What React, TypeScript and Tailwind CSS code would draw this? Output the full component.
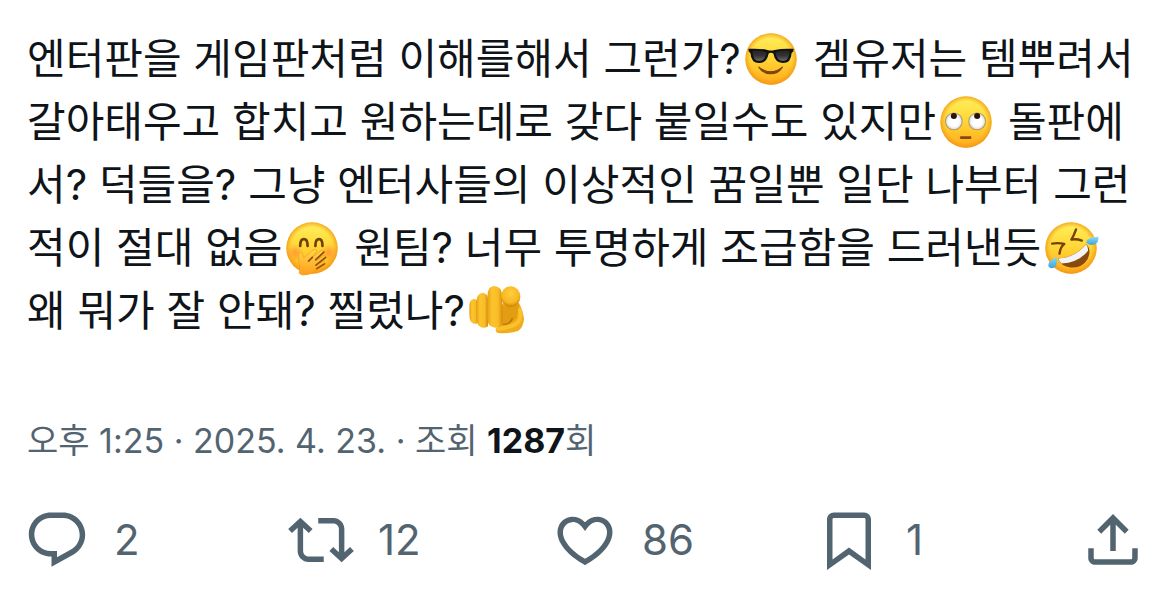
import type { ReactNode } from 'react';

const icons = {
  reply:
    'M1.751 10c0-4.42 3.584-8 8.005-8h4.366c4.49 0 8.129 3.64 8.129 8.13 0 2.96-1.607 5.68-4.196 7.11l-8.054 4.46v-3.69h-.067c-4.49.1-8.183-3.51-8.183-8.01zm8.005-6c-3.317 0-6.005 2.69-6.005 6 0 3.37 2.77 6.08 6.138 6.01l.351-.01h1.761v2.3l5.087-2.81c1.951-1.08 3.163-3.13 3.163-5.36 0-3.39-2.744-6.13-6.129-6.13H9.756z',
  repost:
    'M4.5 3.88l4.432 4.14-1.364 1.46L5.5 7.55V16c0 1.1.896 2 2 2H13v2H7.5c-2.209 0-4-1.79-4-4V7.55L1.432 9.48.068 8.02 4.5 3.88zM16.5 6H11V4h5.5c2.209 0 4 1.79 4 4v8.45l2.068-1.93 1.364 1.46-4.432 4.14-4.432-4.14 1.364-1.46 2.068 1.93V8c0-1.1-.896-2-2-2z',
  like:
    'M16.697 5.5c-1.222-.06-2.679.51-3.89 2.16l-.805 1.09-.806-1.09C9.984 6.01 8.526 5.44 7.304 5.5c-1.243.07-2.349.78-2.91 1.91-.552 1.12-.633 2.78.479 4.82 1.074 1.97 3.257 4.27 7.129 6.61 3.87-2.34 6.052-4.64 7.126-6.61 1.111-2.04 1.03-3.7.477-4.82-.561-1.13-1.666-1.84-2.908-1.91zm4.187 7.69c-1.351 2.48-4.001 5.12-8.379 7.67l-.503.3-.504-.3c-4.379-2.55-7.029-5.19-8.382-7.67-1.36-2.5-1.41-4.86-.514-6.67.887-1.79 2.647-2.91 4.601-3.01 1.651-.09 3.368.56 4.798 2.01 1.429-1.45 3.146-2.1 4.796-2.01 1.954.1 3.714 1.22 4.601 3.01.896 1.81.846 4.17-.514 6.67z',
  bookmark:
    'M4 4.5C4 3.12 5.119 2 6.5 2h11C18.881 2 20 3.12 20 4.5v18.44l-8-5.71-8 5.71V4.5zM6.5 4c-.276 0-.5.22-.5.5v14.56l6-4.29 6 4.29V4.5c0-.28-.224-.5-.5-.5h-11z',
  share:
    'M12 2.59l5.7 5.7-1.41 1.42L13 6.41V16h-2V6.41l-3.3 3.3-1.41-1.42L12 2.59zM21 15l-.02 3.51c0 1.38-1.12 2.49-2.5 2.49H5.5C4.11 21 3 19.88 3 18.5V15h2v3.5c0 .28.22.5.5.5h12.98c.28 0 .5-.22.5-.5L19 15h2z',
};

function Icon({ name }: { name: keyof typeof icons }) {
  return (
    <svg viewBox="0 0 24 24" className="size-[66px] shrink-0 fill-current" aria-hidden="true">
      <path d={icons[name]} />
    </svg>
  );
}

function Face({ label, children }: { label: string; children: ReactNode }) {
  return (
    <svg viewBox="0 0 154 154" role="img" aria-label={label} className="mx-1 inline-block size-[52px] overflow-visible align-[-11px]">
      <circle cx="77" cy="77" r="76" fill="url(#face)" />
      <circle cx="77" cy="77" r="76" fill="url(#rim)" />
      {children}
    </svg>
  );
}

function Gradients() {
  return (
    <svg className="absolute size-0" aria-hidden="true">
      <defs>
        <linearGradient id="face" x1="0" y1="0" x2="0" y2="1">
          <stop offset="0" stopColor="#fff05c" />
          <stop offset=".5" stopColor="#ffd535" />
          <stop offset="1" stopColor="#ffa91a" />
        </linearGradient>
        <radialGradient id="rim">
          <stop offset=".8" stopColor="#f59a12" stopOpacity="0" />
          <stop offset="1" stopColor="#ef8f14" stopOpacity=".7" />
        </radialGradient>
        <linearGradient id="lens" x1="0" y1="0" x2="0" y2="1">
          <stop offset="0" stopColor="#232323" />
          <stop offset=".5" stopColor="#343434" />
          <stop offset="1" stopColor="#6a6a6a" />
        </linearGradient>
        <radialGradient id="eyeball">
          <stop offset=".6" stopColor="#ffffff" />
          <stop offset="1" stopColor="#d5d7dc" />
        </radialGradient>
        <radialGradient id="blush">
          <stop offset="0" stopColor="#ff7437" stopOpacity=".55" />
          <stop offset="1" stopColor="#ff7437" stopOpacity="0" />
        </radialGradient>
        <linearGradient id="palm" x1="0" y1="0" x2="0" y2="1">
          <stop offset="0" stopColor="#ffd84a" />
          <stop offset="1" stopColor="#ff9d1c" />
        </linearGradient>
        <linearGradient id="tear" x1="0" y1="0" x2="0" y2="1">
          <stop offset="0" stopColor="#8bdcfa" />
          <stop offset="1" stopColor="#3ba4dc" />
        </linearGradient>
        <linearGradient id="finger" x1="0" y1="0" x2="1" y2="0">
          <stop offset="0" stopColor="#e5a016" />
          <stop offset=".3" stopColor="#fcc42c" />
          <stop offset=".7" stopColor="#f9bd27" />
          <stop offset="1" stopColor="#d58a0c" />
        </linearGradient>
        <radialGradient id="tip" cx=".5" cy=".35" r=".65">
          <stop offset="0" stopColor="#ffd03c" />
          <stop offset=".7" stopColor="#f6b722" />
          <stop offset="1" stopColor="#cb7e08" />
        </radialGradient>
      </defs>
    </svg>
  );
}

function Sunglasses() {
  return (
    <Face label="선글라스 낀 얼굴">
      <path d="M10 47Q42 45 66 50Q77 53 88 50Q112 45 144 47L143 55L138 59Q137 89 112 89Q89 89 84 61Q77 56 70 61Q65 89 42 89Q18 89 16 59L11 55Z" fill="#111" />
      <path d="M22 53Q43 49 64 57Q60 83 42 83Q23 83 22 53Z" fill="url(#lens)" />
      <path d="M90 57Q111 49 132 53Q131 83 112 83Q94 83 90 57Z" fill="url(#lens)" />
      <path d="M41 101Q76 129 111 101Q98 121 76 121Q54 121 41 101Z" fill="#7d4308" stroke="#7d4308" strokeWidth="3" strokeLinejoin="round" />
    </Face>
  );
}

function RollingEyes() {
  return (
    <Face label="눈 굴리는 얼굴">
      <circle cx="41" cy="75" r="25" fill="url(#eyeball)" stroke="#b69a62" strokeWidth="3" />
      <circle cx="110" cy="75" r="25" fill="url(#eyeball)" stroke="#b69a62" strokeWidth="3" />
      <circle cx="41" cy="59" r="9" fill="#281508" />
      <circle cx="110" cy="59" r="9" fill="#281508" />
      <rect x="59" y="119" width="34" height="8" rx="3" fill="#87480b" />
    </Face>
  );
}

function HandOverMouth() {
  return (
    <Face label="입을 가리고 웃는 얼굴">
      <circle cx="27" cy="90" r="25" fill="url(#blush)" />
      <circle cx="127" cy="90" r="25" fill="url(#blush)" />
      <path d="M42 71Q42 51 53 51Q64 51 64 71M87 71Q87 51 98 51Q108 51 108 71" fill="none" stroke="#714008" strokeWidth="8" strokeLinecap="round" />
      <path d="M39 149Q45 133 38 118L38 96Q40 86 46 90Q50 95 53 106L80 83Q90 78 91 87L78 104L103 85Q113 82 113 91L96 110L112 99Q121 99 117 108L101 121L111 116Q119 118 114 126L88 145Q67 159 50 157Q38 154 39 149Z" fill="url(#palm)" stroke="#f29a1c" strokeWidth="2" />
      <path d="M78 105L67 116M112 89L88 112M117 105L89 128M114 124L91 138" fill="none" stroke="#8f4f0a" strokeWidth="5" strokeLinecap="round" />
    </Face>
  );
}

function Rofl() {
  return (
    <Face label="바닥을 구르며 웃는 얼굴">
      <path d="M21 64Q40 61 57 65Q45 74 43 94M92 22Q85 42 78 52Q93 49 109 55" fill="none" stroke="#754208" strokeWidth="7" strokeLinecap="round" strokeLinejoin="round" />
      <path d="M38 108Q88 106 122 65Q139 82 126 110Q110 136 77 135Q47 131 38 108Z" fill="#884b0b" />
      <path d="M39 108Q89 106 122 66Q129 76 127 86Q98 121 49 123Q42 117 39 108Z" fill="#f4f4f7" />
      <path d="M122 61Q122 46 158 44Q160 61 146 67Q130 71 122 61Z" fill="url(#tear)" />
      <path d="M34 103Q6 118 10 132Q17 141 29 134Q38 127 34 103Z" fill="url(#tear)" />
    </Face>
  );
}

function PointingHand() {
  return (
    <svg viewBox="0 0 168 154" role="img" aria-label="화면을 가리키는 손" className="mx-1 inline-block h-[52px] w-14 overflow-visible align-[-11px]">
      <path d="M89 55L150 52Q164 82 165 103Q162 127 147 137Q116 147 85 142Q79 139 80 131L89 122Z" fill="#efac1c" />
      <path d="M95 62Q99 105 95 119Q124 122 143 97Q147 80 150 56Z" fill="#e29d12" />
      <path d="M153 74Q158 104 142 115Q122 127 87 131" fill="none" stroke="#fbc02a" strokeWidth="12" strokeLinecap="round" />
      <path d="M103 117Q124 117 130 99" fill="none" stroke="#b87409" strokeWidth="4" strokeLinecap="round" />
      <path d="M14 41Q28 40 27 60V112Q21 117 14 115Q1 111 1 87V65Q1 43 14 41Z" fill="url(#finger)" />
      <path d="M40 22Q58 23 57 48V123Q52 128 42 127Q22 124 22 94V53Q23 24 40 22Z" fill="url(#finger)" />
      <path d="M74 2Q100 2 99 35L101 111Q97 128 79 127Q54 126 55 96V35Q55 4 74 2Z" fill="url(#finger)" />
      <ellipse cx="125" cy="34" rx="29" ry="31" fill="url(#tip)" />
    </svg>
  );
}

function Action({ icon, label, count }: { icon: keyof typeof icons; label: string; count: number }) {
  return (
    <div className="flex-1">
      <button type="button" aria-label={`${label} ${count}`} className="flex items-center gap-6 text-[42px] leading-none">
        <Icon name={icon} />
        <span>{count}</span>
      </button>
    </div>
  );
}

export default function App() {
  return (
    <article className="bg-white px-6 pt-[27px] pb-7 font-['Inter','Noto_Sans_CJK_KR',sans-serif] text-[#0f1419]">
      <Gradients />
      <p className="pl-[3px] text-[42px] leading-[63px]">
        엔터판을 게임판처럼 이해를해서 그런가?
        <Sunglasses /> 겜유저는 템뿌려서 갈아태우고 합치고 원하는데로 갖다 붙일수도 있지만
        <RollingEyes /> 돌판에서? 덕들을? 그냥 엔터사들의 이상적인 꿈일뿐 일단 나부터 그런적이 절대 없음
        <HandOverMouth /> 원팀? 너무 투명하게 조급함을 드러낸듯
        <Rofl /> 왜 뭐가 잘 안돼? 찔렀나?
        <PointingHand />
      </p>

      <div className="mt-[73px] pl-[3px] text-[34px] leading-[52px] text-[#536471]">
        <time dateTime="2025-04-23T13:25">오후 1:25 · 2025. 4. 23.</time>
        <span> · 조회 </span>
        <strong className="font-bold text-[#0f1419]">1287</strong>
        <span>회</span>
      </div>

      <div className="mt-10 flex items-center text-[#536471]">
        <Action icon="reply" label="답글" count={2} />
        <Action icon="repost" label="재게시" count={12} />
        <Action icon="like" label="마음에 들어요" count={86} />
        <Action icon="bookmark" label="북마크" count={1} />
        <button type="button" aria-label="공유">
          <Icon name="share" />
        </button>
      </div>
    </article>
  );
}
